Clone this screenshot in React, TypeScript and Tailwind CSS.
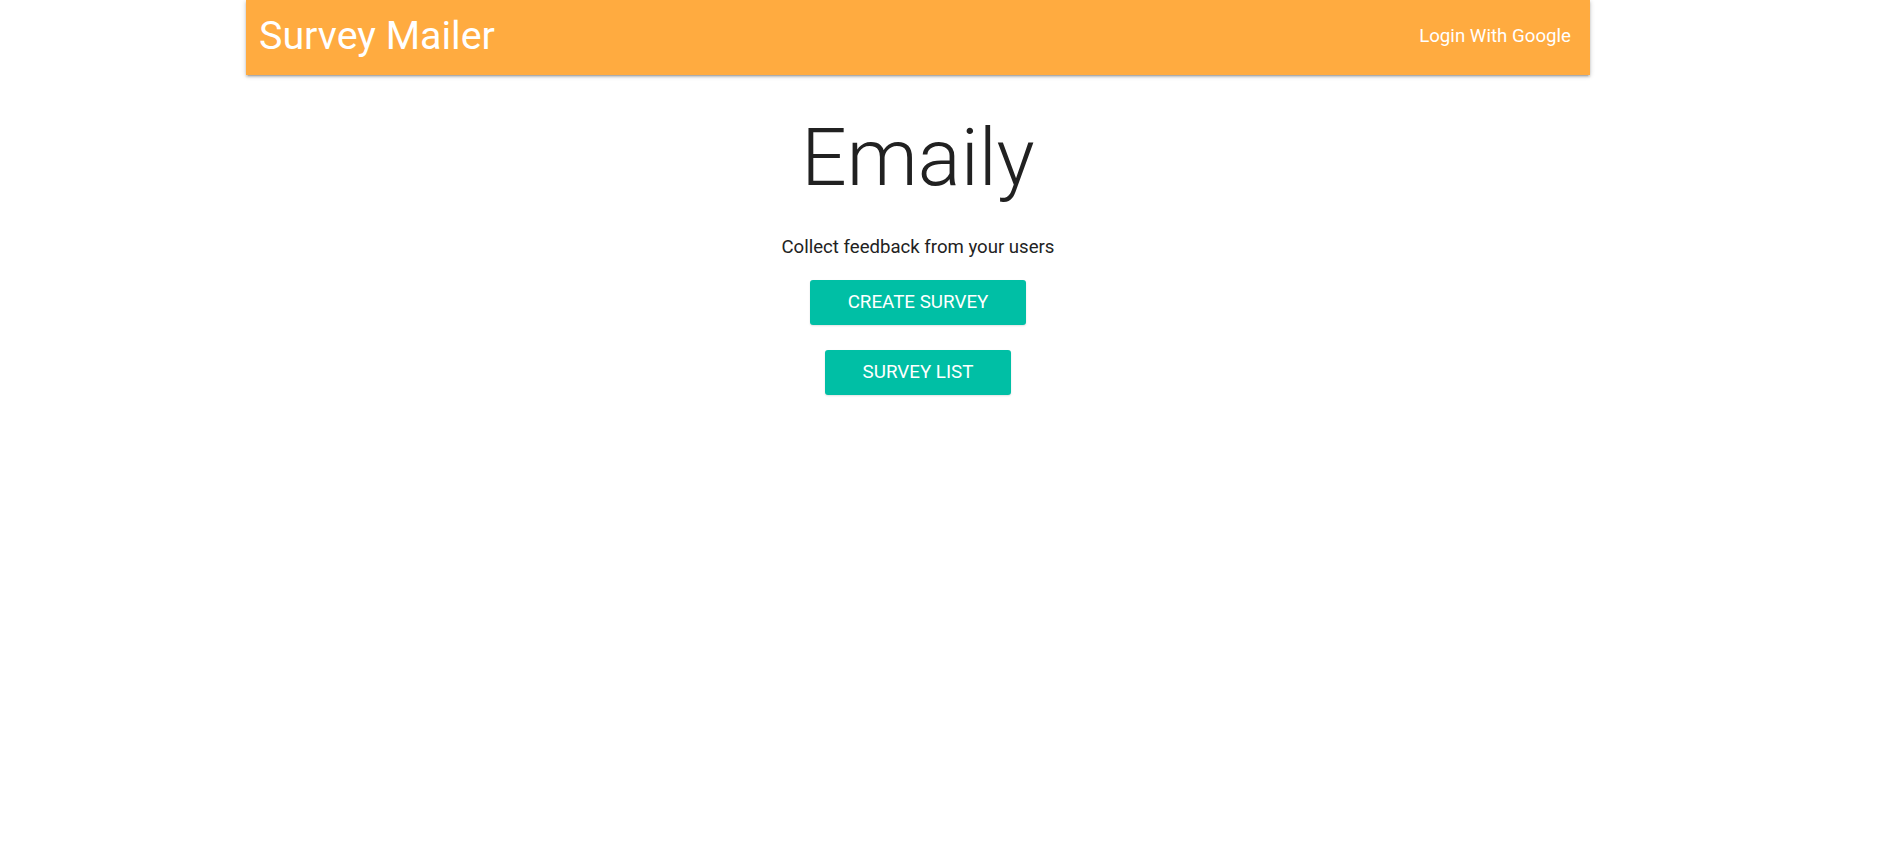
export default function App() {
  return (
    <div className="min-h-[847px] w-full bg-white font-['Roboto',sans-serif]">
      <div className="w-[1836px]">
        <nav className="mx-auto flex h-[75px] w-[1344px] items-center justify-between bg-[#ffab40] px-[13px] text-white shadow-[0_2px_2px_0_rgba(0,0,0,0.14),0_3px_1px_-2px_rgba(0,0,0,0.12),0_1px_5px_0_rgba(0,0,0,0.2)]">
          <a className="pb-[3px] text-[39.4px] leading-[72px]">Survey Mailer</a>
          <a className="pr-[6px] pb-[3px] text-[18.7px] leading-[72px]">Login With Google</a>
        </nav>

        <main className="mx-auto flex w-[1344px] flex-col items-center text-center">
          <h1 className="mt-[39px] text-[80px] font-light leading-[88px] text-[#212121]">Emaily</h1>
          <p className="mt-[32px] text-[18.6px] leading-[27px] text-[#222222]">Collect feedback from your users</p>
          <button className="mt-[19px] h-[45px] w-[216px] rounded-[3px] bg-[#00bfa5] text-[18.8px] uppercase text-white shadow-[0_1px_2px_rgba(0,0,0,0.12)]">
            Create Survey
          </button>
          <button className="mt-[25px] h-[45px] w-[186px] rounded-[3px] bg-[#00bfa5] text-[18.8px] uppercase text-white shadow-[0_1px_2px_rgba(0,0,0,0.12)]">
            Survey List
          </button>
        </main>
      </div>
    </div>
  );
}
